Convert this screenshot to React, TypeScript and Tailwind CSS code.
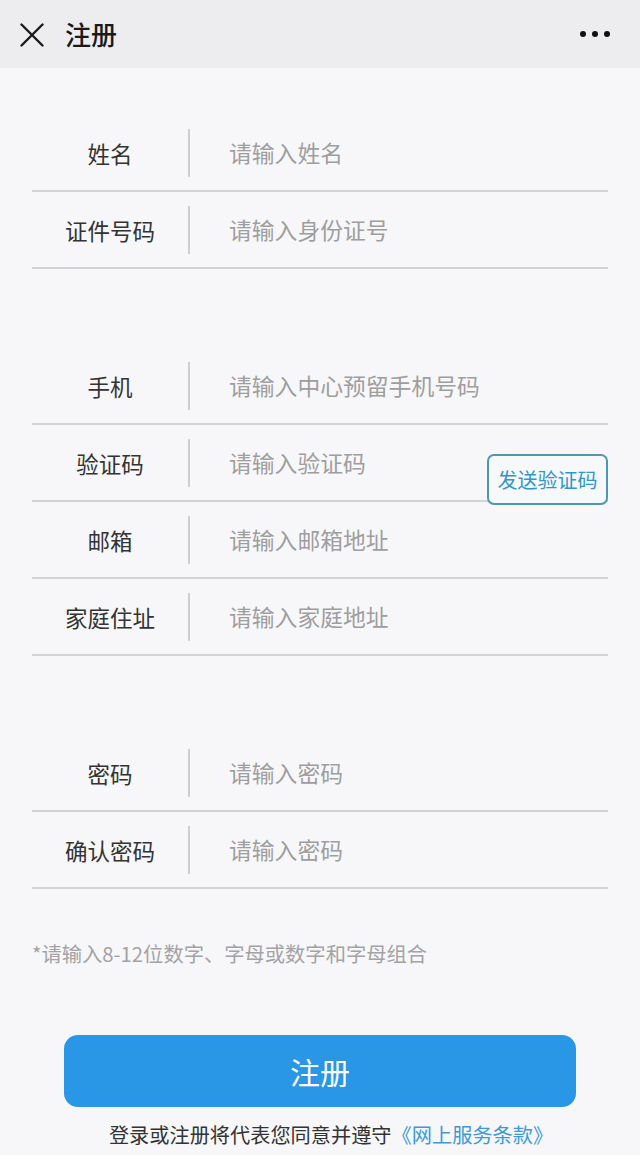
import React from "react";

const font = { fontFamily: '"Noto Sans CJK SC", "Noto Sans", sans-serif' };

type Row = { label: string; placeholder: string; sendCode?: boolean };

const groups: Row[][] = [
  [
    { label: "姓名", placeholder: "请输入姓名" },
    { label: "证件号码", placeholder: "请输入身份证号" },
  ],
  [
    { label: "手机", placeholder: "请输入中心预留手机号码" },
    { label: "验证码", placeholder: "请输入验证码", sendCode: true },
    { label: "邮箱", placeholder: "请输入邮箱地址" },
    { label: "家庭住址", placeholder: "请输入家庭地址" },
  ],
  [
    { label: "密码", placeholder: "请输入密码" },
    { label: "确认密码", placeholder: "请输入密码" },
  ],
];

function FormRow({ row }: { row: Row }) {
  return (
    <div className="relative flex h-[77px] items-center border-b-2 border-[#d3d3d5]">
      <div className="w-[156px] text-center text-[22.5px] leading-[30px] text-[#333]">{row.label}</div>
      <div className="h-[48px] w-[2px] bg-[#cfcfd1]" />
      <div className="pl-[39px] text-[22.8px] leading-[30px] text-[#9e9ea0]">{row.placeholder}</div>
      {row.sendCode && (
        <div className="absolute right-0 top-[29px] z-10 flex h-[51px] w-[121px] items-center justify-center rounded-[7px] border-2 border-[#4d97b3] bg-[#f7f8fa] text-[20px] text-[#2f98c8]">
          发送验证码
        </div>
      )}
    </div>
  );
}

export default function App() {
  return (
    <div className="min-h-[1155px] bg-[#f7f7f9]" style={font}>
      <div className="flex h-[68px] items-center justify-between bg-[#ededf0] pl-[20px] pr-[30px]">
        <div className="flex items-center">
          <svg width="24" height="24" viewBox="0 0 24 24" className="mt-[1px]">
            <path d="M1.5 1.5 L22.5 22.5 M22.5 1.5 L1.5 22.5" stroke="#1a1a1a" strokeWidth="2.4" strokeLinecap="round" />
          </svg>
          <span className="ml-[21px] text-[26px] font-medium leading-[30px] text-[#1a1a1a]">注册</span>
        </div>
        <div className="flex items-center gap-[6px]">
          <span className="h-[6px] w-[6px] rounded-full bg-[#111]" />
          <span className="h-[6px] w-[6px] rounded-full bg-[#111]" />
          <span className="h-[6px] w-[6px] rounded-full bg-[#111]" />
        </div>
      </div>

      <div className="px-8 pt-[47px]">
        {groups.map((g, gi) => (
          <div key={gi} className={gi > 0 ? "mt-[79px]" : ""}>
            {g.map((r, ri) => (
              <FormRow key={ri} row={r} />
            ))}
          </div>
        ))}

        <div className="mt-[52px] text-[20.3px] leading-[24px] text-[#a3a3a5]">*请输入8-12位数字、字母或数字和字母组合</div>

        <div className="mx-8 mt-[70px] flex h-[72px] items-center justify-center rounded-[14px] bg-[#2a96e6] text-[30px] text-white">
          注册
        </div>

        <div className="mt-[16px] pl-[22px] text-center text-[20.2px] leading-[24px] text-[#333]">
          登录或注册将代表您同意并遵守<span className="text-[#3c9bd6]">《网上服务条款》</span>
        </div>
      </div>
    </div>
  );
}
